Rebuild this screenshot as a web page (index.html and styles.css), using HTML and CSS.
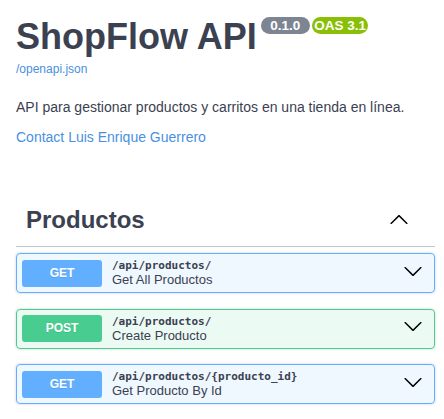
FILE: index.html
```html
<!DOCTYPE html>
<html lang="es">
<head>
<meta charset="utf-8">
<title>ShopFlow API</title>
<link rel="stylesheet" href="styles.css">
</head>
<body>
<div class="page">
  <div class="info">
    <div class="title-row">
      <h2 class="title">ShopFlow API</h2>
      <span class="badge badge-version">0.1.0</span>
      <span class="badge badge-oas">OAS 3.1</span>
    </div>
    <a class="spec-link" href="#">/openapi.json</a>
    <p class="description">API para gestionar productos y carritos en una tienda en línea.</p>
    <a class="contact" href="#">Contact Luis Enrique Guerrero</a>
  </div>

  <section class="tag-section">
    <h3 class="tag">
      <span class="tag-name">Productos</span>
      <svg class="arrow arrow-up" width="20" height="20" viewBox="0 0 20 20"><path transform="rotate(180 10 10)" d="M17.418 6.109c.272-.268.709-.268.979 0s.271.701 0 .969l-7.908 7.83c-.27.268-.707.268-.979 0l-7.908-7.83c-.27-.268-.27-.701 0-.969.271-.268.709-.268.979 0L10 13.25l7.418-7.141z"/></svg>
    </h3>

    <div class="ops">
      <div class="op op-get">
        <span class="method">GET</span>
        <div class="op-text">
          <span class="path">/api/productos/</span>
          <span class="summary">Get All Productos</span>
        </div>
        <svg class="arrow arrow-down" width="20" height="20" viewBox="0 0 20 20"><path d="M17.418 6.109c.272-.268.709-.268.979 0s.271.701 0 .969l-7.908 7.83c-.27.268-.707.268-.979 0l-7.908-7.83c-.27-.268-.27-.701 0-.969.271-.268.709-.268.979 0L10 13.25l7.418-7.141z"/></svg>
      </div>

      <div class="op op-post">
        <span class="method">POST</span>
        <div class="op-text">
          <span class="path">/api/productos/</span>
          <span class="summary">Create Producto</span>
        </div>
        <svg class="arrow arrow-down" width="20" height="20" viewBox="0 0 20 20"><path d="M17.418 6.109c.272-.268.709-.268.979 0s.271.701 0 .969l-7.908 7.83c-.27.268-.707.268-.979 0l-7.908-7.83c-.27-.268-.27-.701 0-.969.271-.268.709-.268.979 0L10 13.25l7.418-7.141z"/></svg>
      </div>

      <div class="op op-get">
        <span class="method">GET</span>
        <div class="op-text">
          <span class="path">/api/productos/{producto_id}</span>
          <span class="summary">Get Producto By Id</span>
        </div>
        <svg class="arrow arrow-down" width="20" height="20" viewBox="0 0 20 20"><path d="M17.418 6.109c.272-.268.709-.268.979 0s.271.701 0 .969l-7.908 7.83c-.27.268-.707.268-.979 0l-7.908-7.83c-.27-.268-.27-.701 0-.969.271-.268.709-.268.979 0L10 13.25l7.418-7.141z"/></svg>
      </div>
    </div>
  </section>
</div>
</body>
</html>
```
FILE: styles.css
```css
html, body {
  margin: 0;
  padding: 0;
  background: #fff;
}

body {
  font-family: "Liberation Sans", Arial, sans-serif;
  color: #3b4151;
}

.page {
  padding: 0 9px 0 16px;
}

.info {
  padding-top: 16px;
}

.title-row {
  display: flex;
  align-items: flex-start;
}

.title {
  margin: 0;
  font-size: 36px;
  line-height: 41px;
  font-weight: 700;
  color: #3b4151;
}

.badge {
  margin-top: 1px;
  font-size: 13.5px;
  line-height: 15px;
  font-weight: 700;
  color: #fff;
  border-radius: 57px;
  padding: 1px 9.5px;
  white-space: nowrap;
}

.badge-version {
  margin-left: 4px;
  background: #7d8492;
}

.badge-oas {
  margin-left: 2px;
  padding: 1px 2.5px;
  background: #89bf04;
}

.spec-link {
  display: block;
  margin-top: 5px;
  font-size: 12px;
  line-height: 15px;
  color: #4990e2;
  text-decoration: none;
}

.description {
  margin: 20px 0 0;
  font-size: 14px;
  line-height: 20px;
  color: #3b4151;
}

.contact {
  display: block;
  margin-top: 10px;
  font-size: 14px;
  line-height: 20px;
  color: #4990e2;
  text-decoration: none;
}

.tag-section {
  margin-top: 51px;
}

.tag {
  margin: 0;
  display: flex;
  align-items: center;
  padding: 8px 26px 12px 10px;
  border-bottom: 1px solid rgba(59, 65, 81, 0.3);
  font-size: 24px;
  line-height: 28px;
  font-weight: 700;
  color: #3b4151;
}

.tag-name {
  flex: 1;
}

.arrow {
  display: block;
  flex: none;
  fill: #000;
}

.ops {
  padding-top: 6px;
}

.op {
  display: flex;
  align-items: center;
  padding: 5px;
  border: 1px solid #61affe;
  border-radius: 4px;
  margin-bottom: 15.5px;
  box-shadow: 0 0 3px rgba(0, 0, 0, 0.19);
}

.op-get {
  background: rgba(97, 175, 254, 0.1);
  border-color: #61affe;
}

.op-post {
  background: rgba(73, 204, 144, 0.1);
  border-color: #49cc90;
}

.method {
  flex: none;
  width: 80px;
  padding: 6px 0;
  border-radius: 3px;
  font-size: 12px;
  line-height: 15px;
  font-weight: 700;
  text-align: center;
  color: #fff;
  text-shadow: 0 1px 0 rgba(0, 0, 0, 0.1);
}

.op-get .method { background: #61affe; }
.op-post .method { background: #49cc90; }

.op-text {
  flex: 1;
  display: flex;
  flex-direction: column;
  padding: 0 10px;
}

.path {
  font-family: "DejaVu Sans Mono", "Liberation Mono", monospace;
  font-size: 11px;
  line-height: 14px;
  font-weight: 700;
  color: #3b4151;
}

.summary {
  font-size: 13px;
  line-height: 14px;
  color: #3b4151;
}

.arrow-down {
  margin-right: 6px;
  margin-bottom: 5px;
}
```
